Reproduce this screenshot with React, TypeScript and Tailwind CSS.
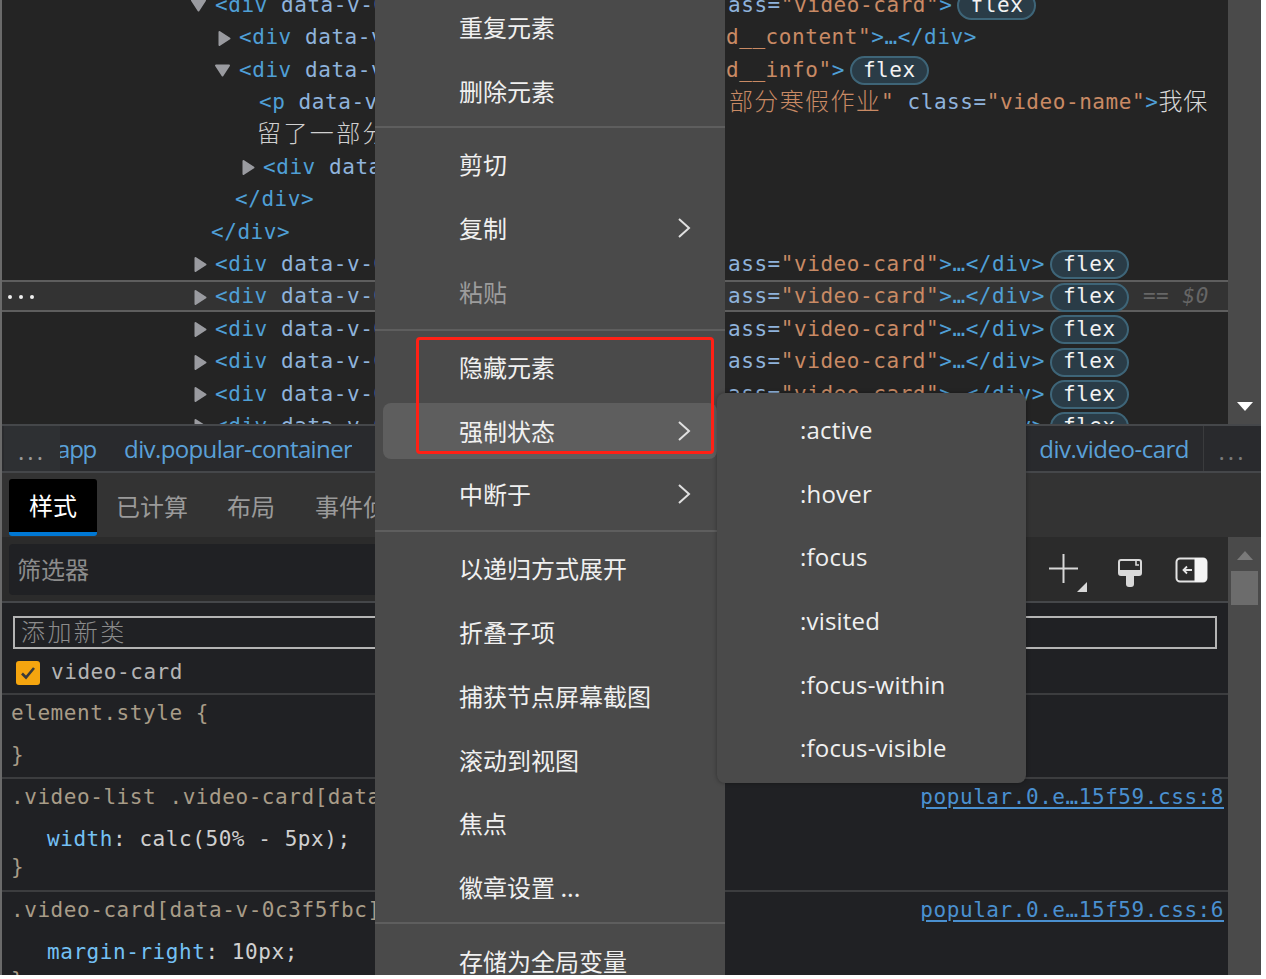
import React from "react";

const MONO = "font-['DejaVu_Sans_Mono','Noto_Sans_CJK_SC',monospace] text-[21px] tracking-[0.56px]";
const UI = "font-['Open_Sans','Noto_Sans_CJK_SC',sans-serif]";

const Tag = ({ children }: { children: React.ReactNode }) => <span className="text-[#4f9fd6]">{children}</span>;
const Attr = ({ children }: { children: React.ReactNode }) => <span className="text-[#8fb3dc]">{children}</span>;
const Val = ({ children, cls = "" }: { children: React.ReactNode; cls?: string }) => <span className={"text-[#c98a64] " + cls}>{children}</span>;
const Cjk = ({ children, cls }: { children: React.ReactNode; cls: string }) => (
  <span className={"font-['Noto_Sans_CJK_SC',sans-serif] text-[24px] leading-none font-light " + cls}>{children}</span>
);

const Badge = () => (
  <span className="ml-[5px] inline-flex h-[29px] w-[79px] shrink-0 items-center justify-center rounded-full border-2 border-[#3e6578] bg-[#2a3c47] text-[#f2f2f2]">
    flex
  </span>
);

const ArrowRight = () => (
  <span className="flex w-[24px] shrink-0 pl-[3px]">
    <svg width="13" height="17" viewBox="0 0 13 17">
      <path d="M1.5 2 L11.5 8.5 L1.5 15 Z" fill="#9a9ba0" stroke="#9a9ba0" strokeWidth="2" strokeLinejoin="round" />
    </svg>
  </span>
);
const ArrowDown = () => (
  <span className="-ml-[1px] flex w-[25px] shrink-0">
    <svg width="17" height="13" viewBox="0 0 17 13">
      <path d="M2 1.5 L15 1.5 L8.5 11.5 Z" fill="#9a9ba0" stroke="#9a9ba0" strokeWidth="2" strokeLinejoin="round" />
    </svg>
  </span>
);

const Closed = () => (
  <>
    <Attr>ass=</Attr>
    <Val>"video-card"</Val>
    <Tag>&gt;…&lt;/div&gt;</Tag>
    <Badge />
  </>
);

const openDiv = (
  <>
    <Tag>&lt;div</Tag> <Attr>data-v-0c3f5fbc=""</Attr>
  </>
);

type Row = { pl: string; arrow?: "r" | "d"; left: React.ReactNode; right?: React.ReactNode; selected?: boolean };

const rows: Row[] = [
  { pl: "pl-[189px]", arrow: "d", left: openDiv, right: <><Attr>ass=</Attr><Val>"video-card"</Val><Tag>&gt;</Tag><Badge /></> },
  { pl: "pl-[213px]", arrow: "r", left: openDiv, right: <><Val cls="-ml-[2px]">d__content"</Val><Tag>&gt;…&lt;/div&gt;</Tag></> },
  { pl: "pl-[213px]", arrow: "d", left: openDiv, right: <><Val cls="-ml-[2px]">d__info"</Val><Tag>&gt;</Tag><Badge /></> },
  {
    pl: "pl-[257px]",
    left: <><Tag>&lt;p</Tag> <Attr>data-v-0c3f5fbc=""</Attr></>,
    right: (
      <>
        <Cjk cls="ml-[1px] pb-[5px] text-[#c98a64] tracking-[1.35px]">部分寒假作业</Cjk>
        <Val>"</Val>
        <Attr>{" class="}</Attr>
        <Val>"video-name"</Val>
        <Tag>&gt;</Tag>
        <Cjk cls="pb-[5px] text-[#d8d8d8] tracking-[1px]">我保</Cjk>
      </>
    ),
  },
  { pl: "pl-[255px]", left: <Cjk cls="text-[#d0d0d0] pb-[3px] tracking-[2.4px]">留了一部分寒假作业</Cjk> },
  { pl: "pl-[237px]", arrow: "r", left: openDiv },
  { pl: "pl-[233px]", left: <Tag>&lt;/div&gt;</Tag> },
  { pl: "pl-[209px]", left: <Tag>&lt;/div&gt;</Tag> },
  { pl: "pl-[189px]", arrow: "r", left: openDiv, right: <Closed /> },
  { pl: "pl-[189px]", arrow: "r", left: openDiv, selected: true, right: <><Closed /><span className="ml-[14px] italic text-[#666]">== $0</span></> },
  { pl: "pl-[189px]", arrow: "r", left: openDiv, right: <Closed /> },
  { pl: "pl-[189px]", arrow: "r", left: openDiv, right: <Closed /> },
  { pl: "pl-[189px]", arrow: "r", left: openDiv, right: <Closed /> },
  { pl: "pl-[189px]", arrow: "r", left: openDiv, right: <Closed /> },
];

const TreeRow = ({ r }: { r: Row }) => (
  <div
    className={
      "relative flex h-[32.4px] shrink-0 items-center whitespace-pre pt-[3px] " +
      (r.selected ? "bg-[#333333] shadow-[inset_0_2px_#5e5e5e,inset_0_-2px_#5e5e5e]" : "")
    }
  >
    {r.selected && (
      <span className="absolute left-[6px] top-[15px] flex gap-[7px]">
        <i className="h-[4px] w-[4px] rounded-full bg-[#f0f0f0]" />
        <i className="h-[4px] w-[4px] rounded-full bg-[#f0f0f0]" />
        <i className="h-[4px] w-[4px] rounded-full bg-[#f0f0f0]" />
      </span>
    )}
    <div className={"flex w-[726px] shrink-0 items-center overflow-hidden " + r.pl}>
      {r.arrow === "r" && <ArrowRight />}
      {r.arrow === "d" && <ArrowDown />}
      <span>{r.left}</span>
    </div>
    {r.right && <div className="flex items-center whitespace-pre">{r.right}</div>}
  </div>
);

type MenuEntry = { label?: string; sub?: boolean; disabled?: boolean; active?: boolean; sep?: string };
const menu: MenuEntry[] = [
  { label: "重复元素" },
  { label: "删除元素" },
  { sep: "h-[10px] pt-[3px]" },
  { label: "剪切" },
  { label: "复制", sub: true },
  { label: "粘贴", disabled: true },
  { sep: "h-[11px] pt-[5px]" },
  { label: "隐藏元素" },
  { label: "强制状态", sub: true, active: true },
  { label: "中断于", sub: true },
  { sep: "h-[10px] pt-[4px]" },
  { label: "以递归方式展开" },
  { label: "折叠子项" },
  { label: "捕获节点屏幕截图" },
  { label: "滚动到视图" },
  { label: "焦点" },
  { label: "徽章设置 ..." },
  { sep: "h-[10px] pt-[3px]" },
  { label: "存储为全局变量" },
];

const Chevron = () => (
  <svg width="14" height="22" viewBox="0 0 14 22" fill="none" stroke="#e0e0e0" strokeWidth="2">
    <path d="M2 2 L12 11 L2 20" />
  </svg>
);

const MenuRow = ({ m }: { m: MenuEntry }) =>
  m.sep ? (
    <div className={"shrink-0 " + m.sep}>
      <div className="h-[2px] bg-[#5e5e5e]" />
    </div>
  ) : (
    <div className="flex h-[63.8px] shrink-0 items-center px-[8px] py-[4px]">
      <div
        className={
          "flex h-full w-full items-center justify-between rounded-[8px] pl-[76px] pr-[26px] text-[24px] leading-none " +
          (m.active ? "bg-[#5e5e5e] " : "") +
          (m.disabled ? "text-[#9c9c9c]" : "text-[#f0f0f0]")
        }
      >
        <span>{m.label}</span>
        {m.sub && <Chevron />}
      </div>
    </div>
  );

const BrushIcon = () => (
  <svg width="26" height="30" viewBox="0 0 26 30" fill="none">
    <path d="M4 2 H22 A2 2 0 0 1 24 4 V15 A2 2 0 0 1 22 17 H4 A2 2 0 0 1 2 15 V4 A2 2 0 0 1 4 2 Z" stroke="#d8d8d8" strokeWidth="2" />
    <rect x="2" y="12" width="22" height="5" fill="#d8d8d8" />
    <path d="M19 2 V7 H22" stroke="#d8d8d8" strokeWidth="1.6" />
    <path d="M9 17 H17 V26 A3 3 0 0 1 14 29 H12 A3 3 0 0 1 9 26 Z" fill="#d8d8d8" />
  </svg>
);

const DockIcon = () => (
  <svg width="33" height="26" viewBox="0 0 33 26" fill="none">
    <rect x="1.5" y="1.5" width="30" height="23" rx="3.5" stroke="#e4e4e4" strokeWidth="2" />
    <path d="M20 1.5 H28 A3.5 3.5 0 0 1 31.5 5 V21 A3.5 3.5 0 0 1 28 24.5 H20 Z" fill="#f4f4f4" stroke="#f4f4f4" />
    <path d="M17 13 H8.5 M12 9.5 L8.5 13 L12 16.5" stroke="#e4e4e4" strokeWidth="1.8" />
  </svg>
);

const PlusIcon = () => (
  <svg width="42" height="38" viewBox="0 0 42 38" fill="none">
    <path d="M0 14.5 H29 M14.5 0 V29" stroke="#d8d8d8" strokeWidth="2" />
    <path d="M38 28 V38 H28 Z" fill="#d8d8d8" />
  </svg>
);

const Ruleline = ({ left, link, cls }: { left: React.ReactNode; link?: string; cls: string }) => (
  <div className={"flex h-[28px] items-center justify-between whitespace-pre pr-[4px] " + cls}>
    <span>{left}</span>
    {link && <span className="text-[#4a90d0] underline underline-offset-[3px]">{link}</span>}
  </div>
);

const sel = "text-[#a89c88]";

export default function App() {
  return (
    <div className="relative h-[979px] w-[1266px] overflow-hidden bg-white">
      <div className="flex h-[975px] w-[1261px] flex-col overflow-hidden border-l-2 border-[#6a6a6a] bg-[#202124]">
        {/* elements tree */}
        <div className="flex h-[424px] shrink-0">
          <div className={"-mt-[12px] flex min-w-0 flex-1 flex-col overflow-hidden bg-[#242424] " + MONO}>
            {rows.map((r, i) => (
              <TreeRow key={i} r={r} />
            ))}
          </div>
          <div className="flex w-[33px] shrink-0 flex-col items-center justify-end bg-[#4a4a4a] pb-[13px]">
            <svg width="16" height="9" viewBox="0 0 16 9">
              <path d="M0 0 H16 L8 9 Z" fill="#ffffff" />
            </svg>
          </div>
        </div>

        {/* breadcrumbs */}
        <div className={"flex h-[49px] shrink-0 items-center justify-between border-y-2 border-[#45474a] bg-[#292a2d] text-[24px] text-[#5aa0d8] " + UI}>
          <div className="flex h-full items-center overflow-hidden">
            <span className="relative z-10 ml-[2px] flex h-full w-[56px] items-center justify-center bg-[#2e3033] pt-[4px] tracking-[3px] text-[#9a9a9a]">...</span>
            <span className="-ml-[3px] tracking-[-1.2px]">app</span>
            <span className="ml-[28px] tracking-[-0.62px]">div.popular-container</span>
          </div>
          <div className="flex h-full items-center">
            <span className="tracking-[-0.5px]">div.video-card</span>
            <span className="ml-[14px] flex h-full w-[58px] items-center justify-center border-l border-[#3a3b3d] pt-[4px] tracking-[3px] text-[#7a7a7a]">...</span>
          </div>
        </div>

        {/* tabs */}
        <div className="flex h-[64px] shrink-0 items-start bg-[#333333] pl-[7px] pt-[6px] font-['Noto_Sans_CJK_SC',sans-serif] text-[24px] text-[#9a9a9a]">
          <div className="flex h-[57px] w-[88px] items-center justify-center rounded-[3px] border-b-4 border-[#0078d4] bg-black pb-[2px] text-white">样式</div>
          <span className="ml-[19px] mt-[9px]">已计算</span>
          <span className="ml-[39px] mt-[9px]">布局</span>
          <span className="ml-[40px] mt-[9px]">事件侦听器</span>
        </div>

        {/* styles area */}
        <div className="flex min-h-0 flex-1">
          <div className="flex min-w-0 flex-1 flex-col">
            <div className="flex h-[66px] shrink-0 items-center justify-between border-b-2 border-[#45474a] bg-[#2b2b2b] pl-[7px] pr-[20px]">
              <div className="flex h-[51px] w-[500px] items-center rounded-[4px] bg-[#202124] pl-[8px] font-['Noto_Sans_CJK_SC',sans-serif] text-[24px] text-[#8c8c8c]">
                筛选器
              </div>
              <div className="mt-[12px] flex items-start">
                <div className="-mt-[4px]"><PlusIcon /></div>
                <div className="ml-[26px]"><BrushIcon /></div>
                <div className="-mt-[1px] ml-[32px]"><DockIcon /></div>
              </div>
            </div>

            <div className={"flex h-[92px] shrink-0 flex-col border-b-2 border-[#3c3d3f] " + MONO}>
              <div className="ml-[11px] mr-[11px] mt-[13px] flex h-[33px] items-center border-2 border-[#b4b4b4] bg-[#202124] pb-[4px] pl-[6px] font-['Noto_Sans_CJK_SC',sans-serif] text-[24px] leading-none font-light tracking-[2.4px] text-[#8c8c8c]">
                添加新类
              </div>
              <div className="ml-[14px] mt-[8px] flex items-center text-[#b4b4b4]">
                <span className="flex h-[24px] w-[24px] items-center justify-center rounded-[3px] bg-[#f5a50f]">
                  <svg width="16" height="14" viewBox="0 0 16 14" fill="none">
                    <path d="M2 7.5 L6 11.5 L14 2" stroke="#3a3a3a" strokeWidth="2.6" />
                  </svg>
                </span>
                <span className="ml-[11px]">video-card</span>
              </div>
            </div>

            <div className={"flex min-h-0 flex-1 flex-col " + MONO}>
              <div className="h-[84px] shrink-0 border-b-2 border-[#3c3d3f] pl-[9px] pt-[5px]">
                <Ruleline cls={sel} left="element.style {" />
                <Ruleline cls={"mt-[14px] " + sel} left="}" />
              </div>
              <div className="h-[113px] shrink-0 border-b-2 border-[#3c3d3f] pl-[9px] pt-[5px]">
                <Ruleline cls={sel} left=".video-list .video-card[data-v-0c3f5fbc] {" link="popular.0.e…15f59.css:8" />
                <Ruleline
                  cls="mt-[14px] pl-[36px] text-[#d0d0d0]"
                  left={<><span className="text-[#74c0f4]">width</span>: calc(50% - 5px);</>}
                />
                <Ruleline cls={sel} left="}" />
              </div>
              <div className="shrink-0 pl-[9px] pt-[5px]">
                <Ruleline cls={sel} left=".video-card[data-v-0c3f5fbc] {" link="popular.0.e…15f59.css:6" />
                <Ruleline
                  cls="mt-[14px] pl-[36px] text-[#d0d0d0]"
                  left={<><span className="text-[#74c0f4]">margin-right</span>: 10px;</>}
                />
                <Ruleline cls={sel} left="}" />
              </div>
            </div>
          </div>
          <div className="relative w-[33px] shrink-0 bg-[#4a4a4a]">
            <svg className="absolute left-[9px] top-[14px]" width="16" height="9" viewBox="0 0 16 9">
              <path d="M0 9 H16 L8 0 Z" fill="#7a7a7a" />
            </svg>
            <div className="absolute left-[3px] top-[34px] h-[34px] w-[27px] bg-[#6c6c6c]" />
          </div>
        </div>
      </div>

      {/* context menu */}
      <div className="absolute left-[375px] top-[-5px] flex h-[980px] w-[350px] flex-col overflow-hidden bg-[#4a4a4a] font-['Noto_Sans_CJK_SC',sans-serif]">
        {menu.map((m, i) => (
          <MenuRow key={i} m={m} />
        ))}
      </div>

      {/* forced-state submenu */}
      <div className={"absolute left-[717px] top-[393px] flex h-[390px] w-[309px] flex-col rounded-[8px] bg-[#4a4a4a] pt-[5px] shadow-[0_0_4px_rgba(0,0,0,0.35)] " + UI}>
        {[":active", ":hover", ":focus", ":visited", ":focus-within", ":focus-visible"].map((s) => (
          <div key={s} className="flex h-[63.7px] shrink-0 items-center pl-[83px] text-[24px] tracking-[0.2px] text-[#f0f0f0]">
            {s}
          </div>
        ))}
      </div>

      {/* annotation */}
      <div className="absolute left-[416px] top-[337px] h-[117px] w-[298px] rounded-[4px] border-[3px] border-[#ff2015]" />
    </div>
  );
}
